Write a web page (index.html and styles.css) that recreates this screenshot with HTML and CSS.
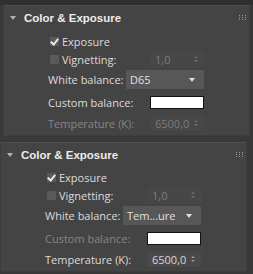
FILE: index.html
```html
<!DOCTYPE html>
<html lang="en">
<head>
    <meta charset="UTF-8">
    <title>Color &amp; Exposure</title>
    <link rel="stylesheet" href="styles.css">
</head>
<body>
    <div class="panel first">
        <div class="rollout-head">
            <span class="arrow"></span>
            <span class="title">Color &amp; Exposure</span>
            <span class="grip"><i></i><i></i><i></i><i></i><i></i><i></i><i></i><i></i><i></i></span>
        </div>
        <div class="rows">
            <div class="row check-row">
                <span class="check on"></span><span class="label">Exposure</span>
            </div>
            <div class="row check-row">
                <span class="check"></span><span class="label">Vignetting:</span>
                <span class="spinner off">1,0<span class="arrows"></span></span>
            </div>
            <div class="row wb-row">
                <span class="label">White balance:</span>
                <span class="dropdown">D65<span class="drop-arrow"></span></span>
            </div>
            <div class="row custom-row">
                <span class="label">Custom balance:</span>
                <span class="swatch"></span>
            </div>
            <div class="row">
                <span class="label dim">Temperature (K):</span>
                <span class="spinner off">6500,0<span class="arrows"></span></span>
            </div>
        </div>
    </div>

    <div class="panel second">
        <div class="rollout-head">
            <span class="arrow"></span>
            <span class="title">Color &amp; Exposure</span>
            <span class="grip"><i></i><i></i><i></i><i></i><i></i><i></i><i></i><i></i><i></i></span>
        </div>
        <div class="rows">
            <div class="row check-row">
                <span class="check on"></span><span class="label">Exposure</span>
            </div>
            <div class="row check-row">
                <span class="check"></span><span class="label">Vignetting:</span>
                <span class="spinner off">1,0<span class="arrows"></span></span>
            </div>
            <div class="row wb-row">
                <span class="label">White balance:</span>
                <span class="dropdown">Tem...ure<span class="drop-arrow"></span></span>
            </div>
            <div class="row custom-row">
                <span class="label dim">Custom balance:</span>
                <span class="swatch"></span>
            </div>
            <div class="row">
                <span class="label">Temperature (K):</span>
                <span class="spinner">6500,0<span class="arrows"></span></span>
            </div>
        </div>
    </div>
</body>
</html>
```

FILE: styles.css
```css
body {
    margin: 0;
    width: 253px;
    height: 274px;
    overflow: hidden;
    background-color: #393939;
    font-family: "Open Sans", "DejaVu Sans", sans-serif;
    font-size: 11px;
    color: #dcdcdc;
    border-top: 5px solid #2f2f2f;
    box-sizing: border-box;
}

.panel {
    background-color: #444444;
    border: 1px solid #3d3d3d;
    border-top-color: #4e4e4e;
    box-sizing: border-box;
    height: 131px;
}

.first {
    margin: 0 3px 0 3px;
}

.second {
    margin: 6px 6px 0 0;
    height: 130px;
}

.second .rows {
    padding-top: 1px;
}

.rollout-head {
    height: 24px;
    display: flex;
    align-items: center;
    padding-left: 6px;
    position: relative;
}

.arrow {
    width: 0;
    height: 0;
    border-left: 3px solid transparent;
    border-right: 3px solid transparent;
    border-top: 4px solid #b0b0b0;
    margin-right: 8px;
}

.title {
    font-family: "Liberation Sans", Arial, sans-serif;
    font-weight: bold;
    font-size: 11.5px;
    color: #ececec;
}

.grip {
    position: absolute;
    right: 2px;
    top: 9px;
    display: grid;
    grid-template-columns: repeat(3, 2px);
    gap: 1px;
}

.grip i {
    width: 1px;
    height: 1px;
    background-color: #9a9a9a;
}

.rows {
    padding: 2px 0 0 44px;
}

.row {
    display: flex;
    align-items: center;
    height: 18px;
    position: relative;
}

.check-row {
    padding-left: 2px;
}

.wb-row {
    height: 22px;
}

.custom-row {
    height: 24px;
}

.label {
    white-space: nowrap;
}

.dim {
    color: #868686;
}

.check {
    width: 9px;
    height: 9px;
    background-color: #5a5a5a;
    margin-right: 3px;
    position: relative;
}

.check.on::after {
    content: "";
    position: absolute;
    left: 2px;
    top: 0;
    width: 3px;
    height: 6px;
    border: solid #e8e8e8;
    border-width: 0 2px 2px 0;
    transform: rotate(40deg);
}

.spinner {
    position: absolute;
    left: 102px;
    width: 55px;
    height: 15px;
    box-sizing: border-box;
    background-color: #4a4a4a;
    border: 1px solid #474747;
    padding-left: 4px;
    line-height: 13px;
    color: #d6d6d6;
}

.spinner.off {
    color: #7c7c7c;
    background-color: #474747;
}

.arrows {
    position: absolute;
    right: 6px;
    top: 3px;
    width: 0;
    height: 0;
    border-left: 2px solid transparent;
    border-right: 2px solid transparent;
    border-bottom: 2px solid #9a9a9a;
}

.arrows::after {
    content: "";
    position: absolute;
    left: -2px;
    top: 4px;
    border-left: 2px solid transparent;
    border-right: 2px solid transparent;
    border-top: 2px solid #9a9a9a;
}

.spinner.off .arrows {
    border-bottom-color: #6e6e6e;
}

.spinner.off .arrows::after {
    border-top-color: #6e6e6e;
}

.dropdown {
    position: absolute;
    left: 78px;
    width: 78px;
    height: 19px;
    box-sizing: border-box;
    background-color: #575757;
    padding-left: 4px;
    line-height: 19px;
    color: #e0e0e0;
}

.drop-arrow {
    position: absolute;
    right: 9px;
    top: 8px;
    border-left: 3px solid transparent;
    border-right: 3px solid transparent;
    border-top: 4px solid #e0e0e0;
}

.swatch {
    position: absolute;
    left: 102px;
    width: 54px;
    height: 13px;
    box-sizing: border-box;
    background-color: #ffffff;
    border: 1px solid #111111;
}
```
